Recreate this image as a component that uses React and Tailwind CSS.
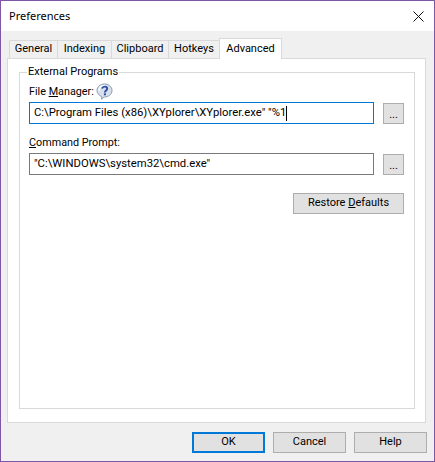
import React from "react";

const F = { fontFamily: 'Roboto, Tahoma, sans-serif' };

function Tab({ label, w, active }) {
  if (active) {
    return (
      <div className="relative z-10 -mb-px flex h-[21px] items-center justify-center border border-b-0 border-[#d9d9d9] bg-white text-[11px] text-black" style={{ width: w }}>
        {label}
      </div>
    );
  }
  return (
    <div className="flex h-[18px] items-center justify-center border-l border-t border-[#d9d9d9] bg-[#f0f0f0] text-[11px] text-black" style={{ width: w }}>
      {label}
    </div>
  );
}

function Btn({ children, className = "" }) {
  return (
    <div className={"flex items-center justify-center border border-[#adadad] bg-[#e1e1e1] text-[11px] text-black " + className}>
      {children}
    </div>
  );
}

function HelpIcon() {
  return (
    <svg width="17" height="17" viewBox="0 0 17 17" className="ml-[2px] mt-[-3px]">
      <path d="M8.5 1C12.6 1 16 3.6 16 7.5S12.6 14 8.5 14H8L5.5 16.2 5.8 13.6C3 12.6 1 10.3 1 7.5 1 3.6 4.4 1 8.5 1Z" fill="#d7e0ea" stroke="#8a9db3" strokeWidth="1" />
      <path d="M3 8C3 4 6 2.5 9 2.5" fill="none" stroke="#ffffff" strokeWidth="1.4" />
      <path d="M6 5.6C6.4 4.2 7.4 3.6 8.7 3.6 10.2 3.6 11.2 4.5 11.2 5.7 11.2 7.4 8.9 7.6 8.9 9.4" fill="none" stroke="#2b4fa0" strokeWidth="1.9" />
      <rect x="7.9" y="10.3" width="2" height="2" fill="#2b4fa0" />
    </svg>
  );
}

function Field({ value, focused, caret }) {
  return (
    <div className="flex items-center gap-[9px]">
      <div className={"flex h-[22px] w-[345px] items-center border bg-white pl-[4px] text-[11.3px] text-black " + (focused ? "border-[#0078d7]" : "border-[#7a7a7a]")}>
        <span className="whitespace-pre">{value}</span>
        {caret && <span className="h-[15px] w-px bg-black" />}
      </div>
      <Btn className="mt-px h-[21px] w-[21px] items-end pb-[2px] leading-[12px]">...</Btn>
    </div>
  );
}

export default function App() {
  return (
    <div style={F} className="flex h-[462px] w-[435px] flex-col border border-[#7e56a6] bg-[#f0f0f0] text-black">
      <div className="flex h-[30px] shrink-0 items-center justify-between bg-white pl-[8px] pr-[10px] text-[11px]">
        <span style={{ fontFamily: '"Noto Sans", sans-serif' }}>Preferences</span>
        <svg width="11" height="11" viewBox="0 0 11 11">
          <path d="M0.5 0.5L10.5 10.5M10.5 0.5L0.5 10.5" stroke="#111" strokeWidth="1" fill="none" />
        </svg>
      </div>
      <div className="flex flex-1 flex-col pl-[6px] pr-[8px] pt-[7px]">
        <div className="flex h-[20px] items-end pl-[2px]">
          <Tab label="General" w={48} />
          <Tab label="Indexing" w={54} />
          <Tab label="Clipboard" w={57} />
          <Tab label="Hotkeys" w={51} />
          <Tab label="Advanced" w={63} active />
        </div>
        <div className="h-[365px] w-[419px] border border-[#d9d9d9] bg-white pl-[11px] pr-[10px] pt-[6px]">
          <fieldset className="h-[344px] border border-[#d9d9d9] pl-[9px] pr-[10px]">
            <legend className="ml-[-2px] px-[1px] text-[11px] leading-[14px]">External Programs</legend>
            <div className="mt-[5px] flex h-[17px] items-center text-[10.8px]">
              <span>File <span className="underline">M</span>anager:</span>
              <HelpIcon />
            </div>
            <div className="mt-[1px]"><Field value={'C:\\Program Files (x86)\\XYplorer\\XYplorer.exe" "%1'} focused caret /></div>
            <div className="mt-[11px] flex h-[17px] items-center text-[10.8px]">
              <span><span className="underline">C</span>ommand Prompt:</span>
            </div>
            <div className="mt-[1px]"><Field value={'"C:\\WINDOWS\\system32\\cmd.exe"'} /></div>
            <div className="mt-[18px] flex justify-end">
              <Btn className="h-[21px] w-[111px]"><span>Restore <span className="underline">D</span>efaults</span></Btn>
            </div>
          </fieldset>
        </div>
        <div className="mr-[-1px] mt-[9px] flex justify-end gap-[8px]">
          <Btn className="h-[21px] w-[73px] !border-2 !border-[#0078d7]">OK</Btn>
          <Btn className="h-[21px] w-[73px]">Cancel</Btn>
          <Btn className="h-[21px] w-[73px]">Help</Btn>
        </div>
      </div>
    </div>
  );
}
